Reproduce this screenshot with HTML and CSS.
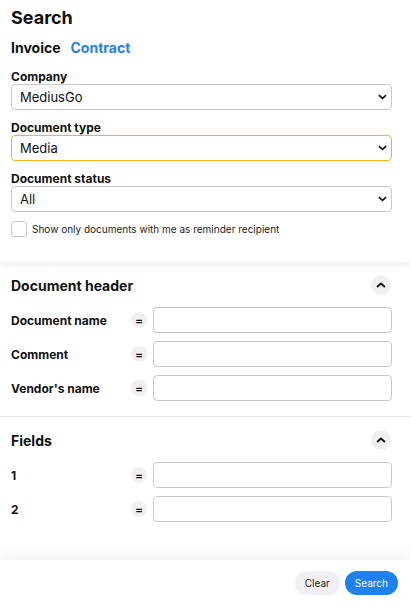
FILE: index.html
```html
<!DOCTYPE html>
<html>
<head>
<meta charset="utf-8">
<link rel="stylesheet" href="styles.css">
</head>
<body>
<div class="page">
  <div class="top">
    <h1 class="title">Search</h1>
    <div class="tabs">
      <span class="tab active">Invoice</span>
      <span class="tab link">Contract</span>
    </div>
    <div class="field">
      <label class="flabel">Company</label>
      <div class="select"><span>MediusGo</span><svg class="caret" viewBox="0 0 10 6" width="9" height="6"><path d="M1 1 L5 4.5 L9 1" fill="none" stroke="#111" stroke-width="1.8"/></svg></div>
    </div>
    <div class="field">
      <label class="flabel">Document type</label>
      <div class="select focus"><span>Media</span><svg class="caret" viewBox="0 0 10 6" width="9" height="6"><path d="M1 1 L5 4.5 L9 1" fill="none" stroke="#111" stroke-width="1.8"/></svg></div>
    </div>
    <div class="field">
      <label class="flabel">Document status</label>
      <div class="select"><span>All</span><svg class="caret" viewBox="0 0 10 6" width="9" height="6"><path d="M1 1 L5 4.5 L9 1" fill="none" stroke="#111" stroke-width="1.8"/></svg></div>
    </div>
    <div class="check">
      <span class="box"></span>
      <span class="ctext">Show only documents with me as reminder recipient</span>
    </div>
  </div>
  <div class="middle">
    <section class="sec">
      <div class="sec-head">
        <h2 class="sec-title">Document header</h2>
        <span class="toggle"><svg viewBox="0 0 10 6" width="10" height="6"><path d="M1 5 L5 1.5 L9 5" fill="none" stroke="#111" stroke-width="1.9"/></svg></span>
      </div>
      <div class="row"><span class="rlabel">Document name</span><span class="eq">=</span><span class="input"></span></div>
      <div class="row"><span class="rlabel">Comment</span><span class="eq">=</span><span class="input"></span></div>
      <div class="row"><span class="rlabel">Vendor's name</span><span class="eq">=</span><span class="input"></span></div>
    </section>
    <section class="sec sec2">
      <div class="sec-head">
        <h2 class="sec-title">Fields</h2>
        <span class="toggle"><svg viewBox="0 0 10 6" width="10" height="6"><path d="M1 5 L5 1.5 L9 5" fill="none" stroke="#111" stroke-width="1.9"/></svg></span>
      </div>
      <div class="row"><span class="rlabel">1</span><span class="eq">=</span><span class="input"></span></div>
      <div class="row"><span class="rlabel">2</span><span class="eq">=</span><span class="input"></span></div>
    </section>
  </div>
  <div class="footer">
    <button class="btn clear">Clear</button>
    <button class="btn primary">Search</button>
  </div>
</div>
</body>
</html>
```
FILE: styles.css
```css
* { box-sizing: border-box; }
html, body { margin: 0; padding: 0; background: #fff; }
body { font-family: Inter, "Noto Sans", sans-serif; color: #111; }
.page { width: 411px; height: 609px; display: flex; flex-direction: column; overflow: hidden; }
.top { height: 262px; padding: 7px 19px 0 11px; position: relative; z-index: 2; background: #fff; box-shadow: 0 2px 8px rgba(0,0,0,0.09); }
.title { margin: 0; font-size: 18px; font-weight: 700; line-height: 22px; }
.tabs { display: flex; gap: 10px; margin-top: 9px; line-height: 20px; font-size: 14px; font-weight: 700; }
.tab.link { color: #1f80ef; }
.field { margin-top: 10px; }
.tabs + .field { margin-top: 11px; }
.flabel { display: block; font-size: 12px; font-weight: 700; line-height: 15px; }
.select { height: 26px; border: 1px solid #c8c8c8; border-radius: 4px; display: flex; align-items: center; justify-content: space-between; padding: 0 4px 0 8px; font-size: 13px; }
.select.focus { border-color: #f5b21d; }
.caret { display: block; }
.check { display: flex; align-items: center; gap: 5px; margin-top: 9px; }
.box { width: 16px; height: 16px; border: 1px solid #c8c8c8; border-radius: 3px; }
.ctext { font-size: 10px; color: #222; }
.middle { flex: 1; padding-top: 13px; }
.sec { padding: 0 19px 15px 11px; }
.sec2 { border-top: 1px solid #e8e8ea; padding-top: 13px; }
.sec-head { display: flex; align-items: center; justify-content: space-between; height: 20px; margin-bottom: 12px; }
.sec-title { margin: 0; font-size: 14px; font-weight: 700; }
.toggle { width: 20px; height: 20px; border-radius: 50%; background: #f0f0f4; display: flex; align-items: center; justify-content: center; margin-right: 1px; }
.row { display: flex; align-items: center; height: 26px; margin-bottom: 8px; }
.row:last-child { margin-bottom: 0; }
.rlabel { width: 120px; font-size: 12px; font-weight: 700; }
.eq { width: 16px; height: 16px; border-radius: 50%; background: #f0f0f4; font-size: 12px; font-weight: 600; display: flex; align-items: center; justify-content: center; margin-right: 6px; }
.input { flex: 1; height: 26px; border: 1px solid #c8c8c8; border-radius: 4px; }
.footer { height: 49px; display: flex; justify-content: flex-end; align-items: flex-start; gap: 5px; padding: 11px 13px 0 0; position: relative; z-index: 2; background: #fff; box-shadow: 0 -6px 14px rgba(0,0,0,0.05); }
.btn { border: none; border-radius: 12px; height: 24px; font-family: Inter, sans-serif; font-size: 10px; padding: 0 10px; }
.btn.clear { background: #f0f0f4; color: #222; }
.btn.primary { background: #1f80ef; color: #fff; }
```
